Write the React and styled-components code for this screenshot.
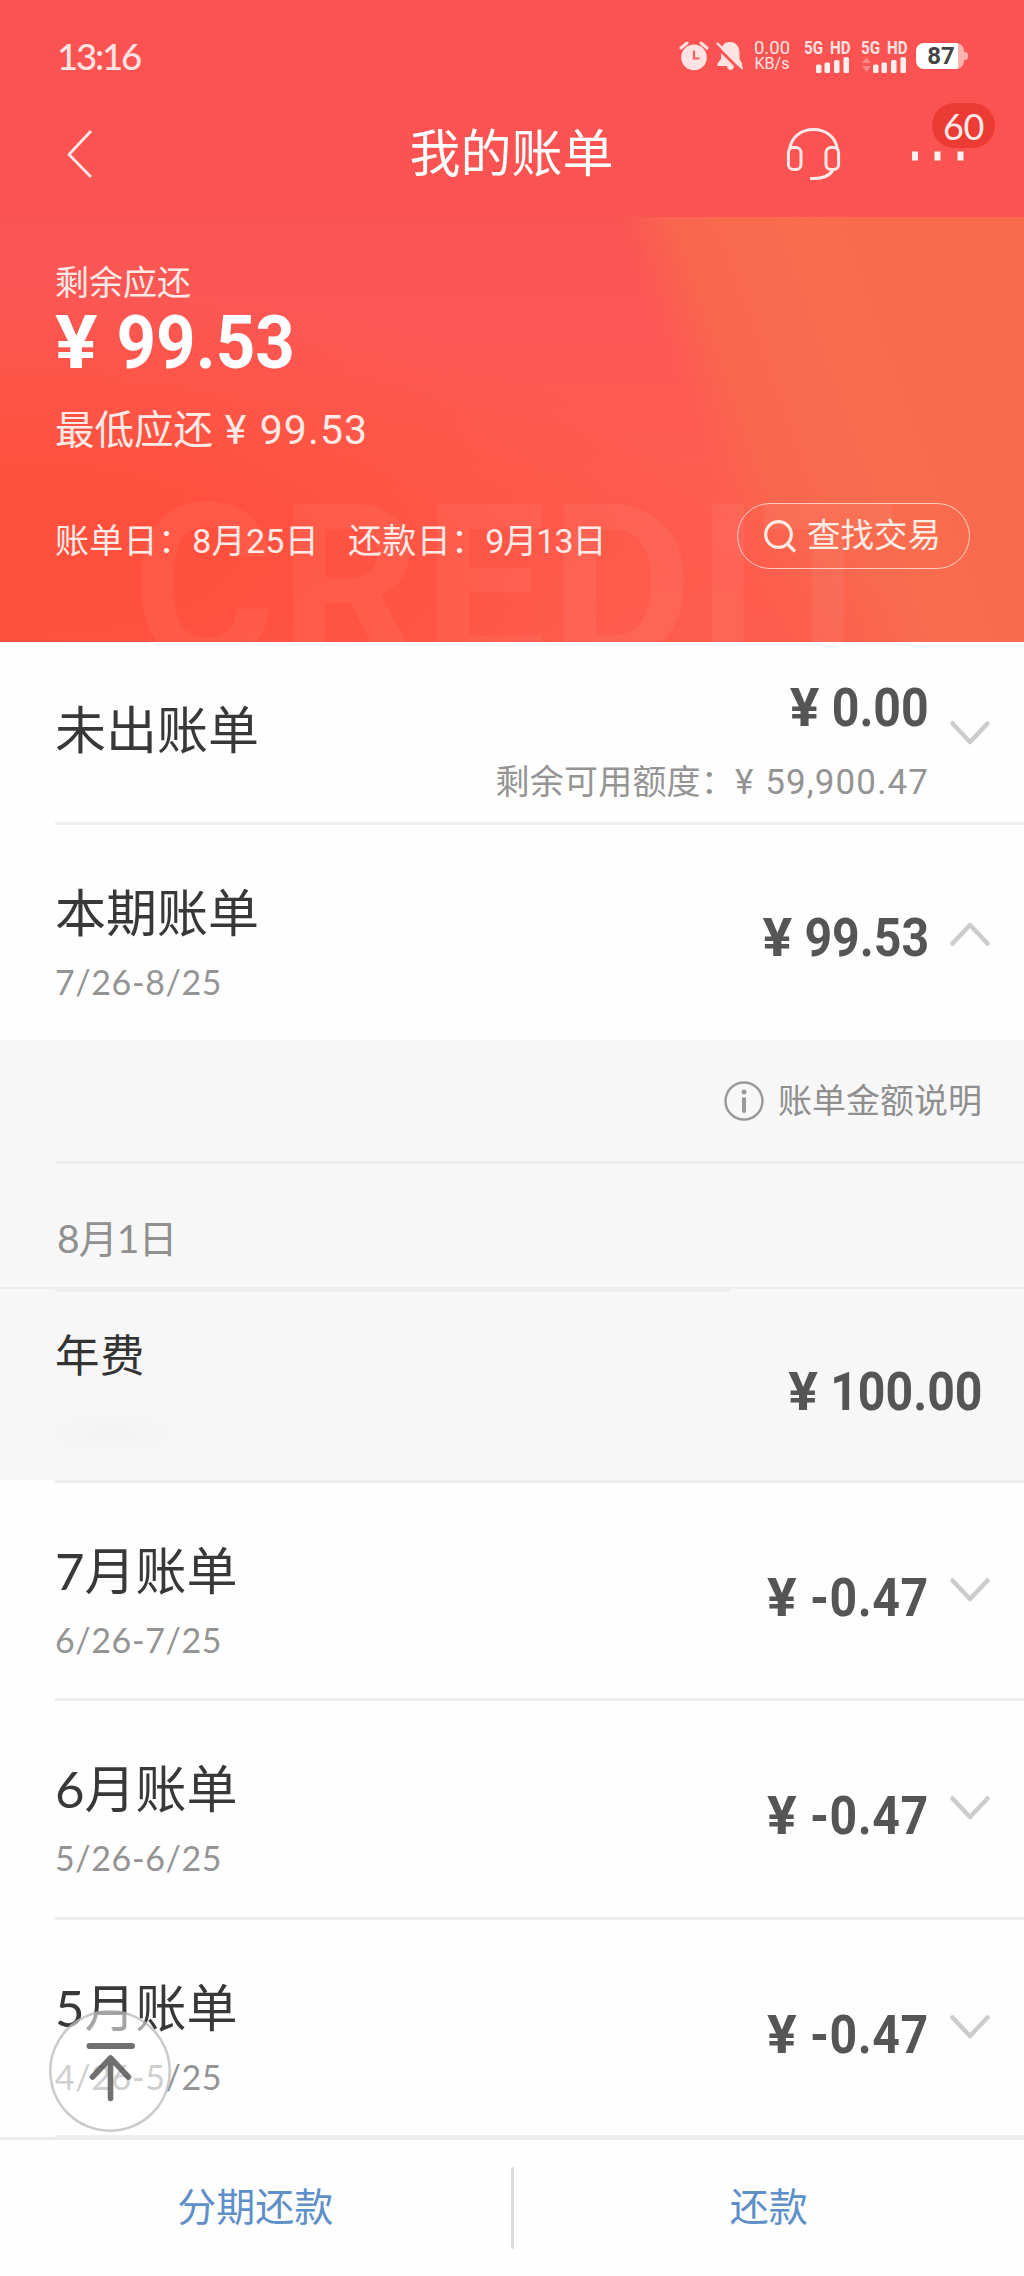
import React, { useState } from 'react'
import styled, { createGlobalStyle } from 'styled-components'

const bills = [
    { id: 7, title: '7月账单', period: '6/26-7/25', amount: '-0.47', height: 218 },
    { id: 6, title: '6月账单', period: '5/26-6/25', amount: '-0.47', height: 219 },
    { id: 5, title: '5月账单', period: '4/26-5/25', amount: '-0.47', height: 218 },
];

export default function App() {

    const [open, setOpen] = useState(true);

    return (
        <Page>
            <GlobalStyle />
            <StatusBar />
            <NavBar />
            <Summary />

            <BillRow height={180} first>
                <BillInfo>
                    <BillTitle>未出账单</BillTitle>
                </BillInfo>
                <BillSide top={36}>
                    <Money value="0.00" />
                    <Quota>剩余可用额度：<span>¥ 59,900.47</span></Quota>
                </BillSide>
                <Chevron top={76} />
            </BillRow>
            <BillRow height={218} onClick={() => setOpen(!open)}>
                <BillInfo>
                    <BillTitle>本期账单</BillTitle>
                    <Period>7/26-8/25</Period>
                </BillInfo>
                <BillSide top={83}>
                    <Money value="99.53" />
                </BillSide>
                <Chevron top={94} up={open} />
            </BillRow>

            {open && <BillDetail />}

            {
                bills.map(bill => (
                    <BillRow key={bill.id} height={bill.height}>
                        <BillInfo>
                            <BillTitle>{bill.title}</BillTitle>
                            <Period>{bill.period}</Period>
                        </BillInfo>
                        <BillSide top={85}>
                            <Money value={bill.amount} />
                        </BillSide>
                        <Chevron top={92} />
                    </BillRow>
                ))
            }
            <ListEnd />

            <Footer>
                <FooterButton>分期还款</FooterButton>
                <FooterLine />
                <FooterButton>还款</FooterButton>
            </Footer>

            <BackTop>
                <svg width="122" height="122" viewBox="0 0 122 122" fill="none" stroke="#5c5c5c" strokeOpacity="0.88" strokeLinecap="round" strokeLinejoin="round">
                    <path d="M40.500 36H83" strokeWidth="6" />
                    <path d="M61.500 48V88.500M43.500 67L61.500 48L79.500 67" strokeWidth="5.600" />
                </svg>
            </BackTop>
        </Page>
    )
}

function StatusBar() {
    return (
        <Status>
            <Time>13:16</Time>
            <svg width="30" height="30" viewBox="0 0 30 30">
                <circle cx="15" cy="16.400" r="12.800" fill="#ffe3e2" />
                <path d="M2 7L8 2M28 7L22 2" stroke="#ffe3e2" strokeWidth="3" strokeLinecap="round" />
                <path d="M15 9.500V17.500H20.500" stroke="#f9605e" strokeWidth="2.200" fill="none" />
            </svg>
            <BellIcon width="28" height="30" viewBox="0 0 28 30">
                <path d="M14 1C7.500 1 5 6 5 11V18L1.500 22.500V25H11C11.500 28 13 29 14.500 29C16 29 17.500 28 18 25H26V22.500L23.500 18V11C23.500 6 20 1 14 1Z" fill="#ffe3e2" />
                <path d="M-1 4L25 30" stroke="#fa5351" strokeWidth="3" />
                <path d="M1.500 2.500L26 27" stroke="#ffe3e2" strokeWidth="2.400" strokeLinecap="round" />
            </BellIcon>
            <Speed>
                <span>0.00</span>
                <span>KB/s</span>
            </Speed>
            <Signal />
            <Signal data />
            <Battery>
                <b>87</b>
            </Battery>
        </Status>
    )
}

function Signal({ data }) {
    return (
        <SignalBox $data={data}>
            <span>5G HD</span>
            <svg width="46" height="17" viewBox="0 0 46 17" fill="#fff0ef">
                {data && <path d="M1 7L5.500 1L10 7ZM1 10L5.500 16L10 10Z" fill="#fd8987" />}
                <rect x="12" y="8.500" width="5.500" height="8.500" rx="1.500" />
                <rect x="20.500" y="6.500" width="5.500" height="10.500" rx="1.500" />
                <rect x="30" y="4" width="5.500" height="13" rx="1.500" />
                <rect x="39.500" y="1" width="5.500" height="16" rx="1.500" />
            </svg>
        </SignalBox>
    )
}

function NavBar() {
    return (
        <Nav>
            <svg width="30" height="54" viewBox="0 0 30 54" fill="none" stroke="#ffe9e8" strokeWidth="2.800" strokeLinejoin="round">
                <path d="M26 4L4 27.500L26 50" />
            </svg>
            <NavTitle>我的账单</NavTitle>
            <NavActions>
                <svg width="56" height="56" viewBox="0 0 56 56" fill="none" stroke="#ffe9e8" strokeWidth="3">
                    <rect x="3.400" y="21.500" width="12.600" height="22" rx="5" />
                    <rect x="41" y="21.500" width="12.600" height="22" rx="5" />
                    <path d="M4.500 24C6 11 16 3.400 28.500 3.400C41 3.400 51 11 52.500 24" />
                    <path d="M48 43.500C45 50 36 53 25 52.500" />
                </svg>
                <More>
                    <svg width="56" height="12" viewBox="0 0 56 12" fill="#fff3f2">
                        <rect x="2" y="1.500" width="6" height="9" />
                        <rect x="24.500" y="1.500" width="6" height="9" />
                        <rect x="47.500" y="1.500" width="6" height="9" />
                    </svg>
                    <Badge>60</Badge>
                </More>
            </NavActions>
        </Nav>
    )
}

function Summary() {
    return (
        <Hero>
            <Watermark>CREDIT</Watermark>
            <HeroLabel>剩余应还</HeroLabel>
            <HeroAmount><Yuan>¥</Yuan> 99.53</HeroAmount>
            <HeroMin>最低应还 <span>¥ 99.53</span></HeroMin>
            <HeroBottom>
                <HeroDate>账单日：<span>8月25日</span></HeroDate>
                <HeroDate $tight>还款日：<span>9月13日</span></HeroDate>
                <SearchButton>
                    <svg width="34" height="34" viewBox="0 0 34 34" fill="none" stroke="#ffece4" strokeWidth="3.200" strokeLinecap="round">
                        <circle cx="15.500" cy="15.500" r="12.800" />
                        <path d="M24.500 25L31 31.500" />
                    </svg>
                    查找交易
                </SearchButton>
            </HeroBottom>
        </Hero>
    )
}

function BillDetail() {
    return (
        <Detail>
            <DetailNote>
                <svg width="40" height="40" viewBox="0 0 40 40" fill="none" stroke="#999">
                    <circle cx="20" cy="20" r="18.500" strokeWidth="2.400" />
                    <path d="M20 18V30" strokeWidth="4" strokeLinecap="round" />
                    <circle cx="20" cy="11" r="2.500" fill="#999" stroke="none" />
                </svg>
                账单金额说明
            </DetailNote>
            <DetailDate>8月1日</DetailDate>
            <DetailLine />
            <DetailItem>
                <ItemName>年费</ItemName>
                <Money value="100.00" />
            </DetailItem>
        </Detail>
    )
}

function Money({ value }) {
    return <Amount $negative={value.startsWith('-')}><Yuan>¥</Yuan> {value}</Amount>
}

function Chevron({ top, up }) {
    return (
        <ChevronIcon $top={top} $up={up} width="42" height="30" viewBox="0 0 42 30">
            <path d="M3.500 5.500L21 24L38.500 5.500" />
        </ChevronIcon>
    )
}

function BillRow({ height, first, onClick, children }) {
    return <Row $height={height} $first={first} onClick={onClick}>{children}</Row>
}

function BillSide({ top, children }) {
    return <Side $top={top}>{children}</Side>
}


const GlobalStyle = createGlobalStyle`
    * {
        box-sizing: border-box;
    }

    body {
        margin: 0;
        background: #fefefe;
        font-family: 'Roboto', 'Noto Sans CJK SC', sans-serif;
    }

    button {
        margin: 0;
        padding: 0;
        border: 0;
        background: none;
        font: inherit;
        color: inherit;
    }

    svg {
        display: block;
        flex: none;
    }
`;

const Page = styled.div`
    position: relative;
    width: 1024px;
    height: 2276px;
    overflow: hidden;
    white-space: nowrap;
`;

const Status = styled.div`
    display: flex;
    align-items: center;
    height: 112px;
    padding: 0 55px 0 57px;
    background: #fa5351;
    color: #ffe3e2;
`;

const Time = styled.div`
    width: 622px;
    font: 500 36.500px/40px 'Lato', sans-serif;
    letter-spacing: -2.200px;
`;

const BellIcon = styled.svg`
    margin-left: 7px;
`;

const Speed = styled.div`
    display: flex;
    flex-direction: column;
    align-items: center;
    width: 38px;
    margin-left: 9px;
    font: 400 18px/15px 'Roboto', sans-serif;

    span:first-child {
        font-size: 18.500px;
    }

    span:last-child {
        font-size: 16px;
    }
`;

const SignalBox = styled.div`
    display: flex;
    flex-direction: column;
    width: 46px;
    margin-left: ${props => props.$data ? '11px' : '13px'};
    font: 700 19px/16px 'Roboto', sans-serif;

    span {
        word-spacing: 4px;
        transform: scaleX(0.8);
        transform-origin: left;
    }
`;

const Battery = styled.div`
    position: relative;
    width: 48px;
    height: 26px;
    margin-left: 9px;
    border-radius: 8px;
    background: linear-gradient(90deg, #fff 42px, #ffb3b1 42px);
    text-align: center;

    b {
        display: block;
        padding-left: 2px;
        font: 700 24px/27px 'Roboto', sans-serif;
        color: #444;
    }

    &::after {
        content: '';
        position: absolute;
        left: 48px;
        top: 9px;
        width: 4px;
        height: 8px;
        border-radius: 0 3px 3px 0;
        background: #ffb3b1;
    }
`;

const Nav = styled.header`
    display: grid;
    grid-template-columns: 1fr auto 1fr;
    align-items: center;
    height: 105px;
    padding: 0 58px 22px 65px;
    background: #fa5351;
`;

const NavTitle = styled.div`
    margin: 2px 8px 0 0;
    font-size: 51px;
    line-height: 60px;
    color: #fff;
`;

const NavActions = styled.div`
    display: flex;
    align-items: center;
    justify-content: flex-end;
    gap: 69px;
`;

const More = styled.div`
    position: relative;
    padding-top: 4px;
`;

const Badge = styled.div`
    position: absolute;
    left: 22px;
    top: -43px;
    width: 63px;
    height: 45px;
    border-radius: 23px;
    background: #ec3a35;
    font: 400 36px/47px 'Lato', sans-serif;
    letter-spacing: -0.5px;
    text-align: center;
    color: #ffe9e8;
`;

const Hero = styled.section`
    position: relative;
    display: flex;
    flex-direction: column;
    height: 425px;
    padding: 46px 54px 0 55px;
    overflow: hidden;
    background:
        radial-gradient(ellipse 230px 150px at 690px 440px, rgba(253, 93, 78, 0.9) 40%, rgba(253, 93, 78, 0) 100%),
        linear-gradient(70deg, rgba(249, 108, 78, 0) 65.5%, #f9674e 70.5%, #f96c4e 80%, #f9694c 100%),
        radial-gradient(ellipse 720px 260px at 0 78%, #ff503d 30%, rgba(255, 80, 61, 0) 100%),
        linear-gradient(180deg, #f95553 0%, #fd5855 30%, #fd5d51 60%, #ff5a4b 100%);
    color: #ffeae6;
`;

const Watermark = styled.div`
    position: absolute;
    left: 132px;
    top: 259px;
    font: 700 220px/220px 'Roboto', sans-serif;
    letter-spacing: 3px;
    color: rgba(255, 255, 255, 0.05);
`;

/* the glyph of the currency sign is drawn a bit wider than the digits */
const Yuan = styled.span`
    display: inline-block;
    transform: scaleX(1.15);
    transform-origin: left;
`;

const HeroLabel = styled.div`
    font-size: 34px;
    line-height: 40px;
`;

const HeroAmount = styled.div`
    height: 76px;
    margin-top: 1px;
    font-size: 75px;
    font-weight: 700;
    line-height: 76px;
    word-spacing: 8px;
    color: #fff;
    transform: scaleX(0.92);
    transform-origin: left;
`;

const HeroMin = styled.div`
    margin-top: 25px;
    font-size: 39.500px;
    line-height: 50px;

    span {
        font-size: 41px;
        font-weight: 400;
        letter-spacing: 1.100px;
        word-spacing: 1px;
        margin-left: 2px;
    }
`;

const HeroBottom = styled.div`
    display: flex;
    align-items: center;
    height: 66px;
    margin-top: 47px;
`;

const HeroDate = styled.div`
    margin-right: 29px;
    padding-top: 9px;
    font-size: 34px;
    line-height: 40px;
    letter-spacing: 0.3px;

    span {
        letter-spacing: ${props => props.$tight ? '-1px' : '0.3px'};
    }
`;

const SearchButton = styled.button`
    display: flex;
    align-items: center;
    gap: 10px;
    width: 233px;
    height: 66px;
    margin-left: auto;
    padding-left: 25px;
    border: 1.500px solid rgba(255, 236, 228, 0.75);
    border-radius: 33px;
    font-size: 33.500px;
    line-height: 40px;
    color: #ffece4;
`;

const Row = styled.div`
    display: flex;
    align-items: flex-start;
    height: ${props => props.$height}px;
    margin-left: 55px;
    padding-right: 33px;
    border-top: ${props => props.$first ? '0' : '3px solid #efefef'};
`;

const BillInfo = styled.div`
    flex: 1;
    padding-top: 58px;
`;

const BillTitle = styled.div`
    font-family: 'Lato', 'Noto Sans CJK SC', sans-serif;
    font-size: 51px;
    line-height: 60px;
    color: #383838;
`;

const Period = styled.div`
    margin-top: 20px;
    font: 400 34px/38px 'Lato', sans-serif;
    letter-spacing: 0.6px;
    color: #949494;
`;

const Side = styled.div`
    display: flex;
    flex-direction: column;
    align-items: flex-end;
    padding-top: ${props => props.$top}px;
`;

const Amount = styled.div`
    font-size: 53px;
    font-weight: 700;
    line-height: 60px;
    letter-spacing: ${props => props.$negative ? '0.6px' : '0'};
    word-spacing: 4.500px;
    color: #555;
    transform: scaleX(0.91);
    transform-origin: right;
`;

const Quota = styled.div`
    margin-top: 24px;
    font-size: 34px;
    line-height: 40px;
    letter-spacing: 0.2px;
    color: #949494;

    span {
        font-size: 35px;
        font-weight: 400;
        letter-spacing: 1.100px;
        word-spacing: 1px;
    }
`;

const ChevronIcon = styled.svg`
    margin: ${props => props.$top}px 0 0 20px;
    fill: none;
    stroke: #ccc;
    stroke-width: 4.500px;
    stroke-linecap: round;
    stroke-linejoin: round;
    transform: ${props => props.$up ? 'scaleY(-1)' : 'none'};
`;

const Detail = styled.div`
    height: 440px;
    background: #f7f7f7;
`;

const DetailNote = styled.div`
    display: flex;
    align-items: center;
    justify-content: flex-end;
    gap: 14px;
    height: 124px;
    margin-left: 55px;
    padding-right: 42px;
    border-bottom: 3px solid #efefef;
    font-size: 34px;
    line-height: 40px;
    color: #8f8f8f;
`;

const DetailDate = styled.div`
    height: 123px;
    padding: 49px 0 0 57px;
    font: 400 39px/50px 'Lato', 'Noto Sans CJK SC', sans-serif;
    letter-spacing: -0.9px;
    color: #909090;
`;

/* the rule under the date is thicker on its left part */
const DetailLine = styled.div`
    height: 5px;
    border-top: 2px solid #efefef;

    &::after {
        content: '';
        display: block;
        width: 675px;
        height: 3px;
        margin-left: 55px;
        background: #efefef;
    }
`;

const DetailItem = styled.div`
    display: flex;
    justify-content: space-between;
    height: 188px;
    padding: 0 41px 0 55px;
    background: radial-gradient(ellipse 80px 24px at 112px 141px, #f3f3f3, #f7f7f7);

    ${Amount} {
        padding-top: 70px;
    }
`;

const ItemName = styled.div`
    padding-top: 35px;
    font-size: 44.500px;
    line-height: 60px;
    letter-spacing: 0.5px;
    color: #333;
`;

const ListEnd = styled.div`
    height: 2px;
    margin-left: 55px;
    background: #efefef;
`;

const Footer = styled.footer`
    display: flex;
    height: 139px;
    border-top: 3px solid #ededed;
`;

const FooterButton = styled.button`
    flex: 1;
    padding-bottom: 1px;
    font-size: 39px;
    line-height: 50px;
    color: #5e8fc9;
`;

const FooterLine = styled.div`
    width: 3px;
    height: 82px;
    margin-top: 27px;
    border-radius: 2px;
    background: #dcdcdc;
`;

const BackTop = styled.button`
    position: absolute;
    left: 49px;
    top: 2010px;
    width: 122px;
    height: 122px;
    border-radius: 50%;
    background: rgba(255, 255, 255, 0.55);
    box-shadow: inset 0 0 0 2.500px rgba(150, 150, 150, 0.5);
`;
